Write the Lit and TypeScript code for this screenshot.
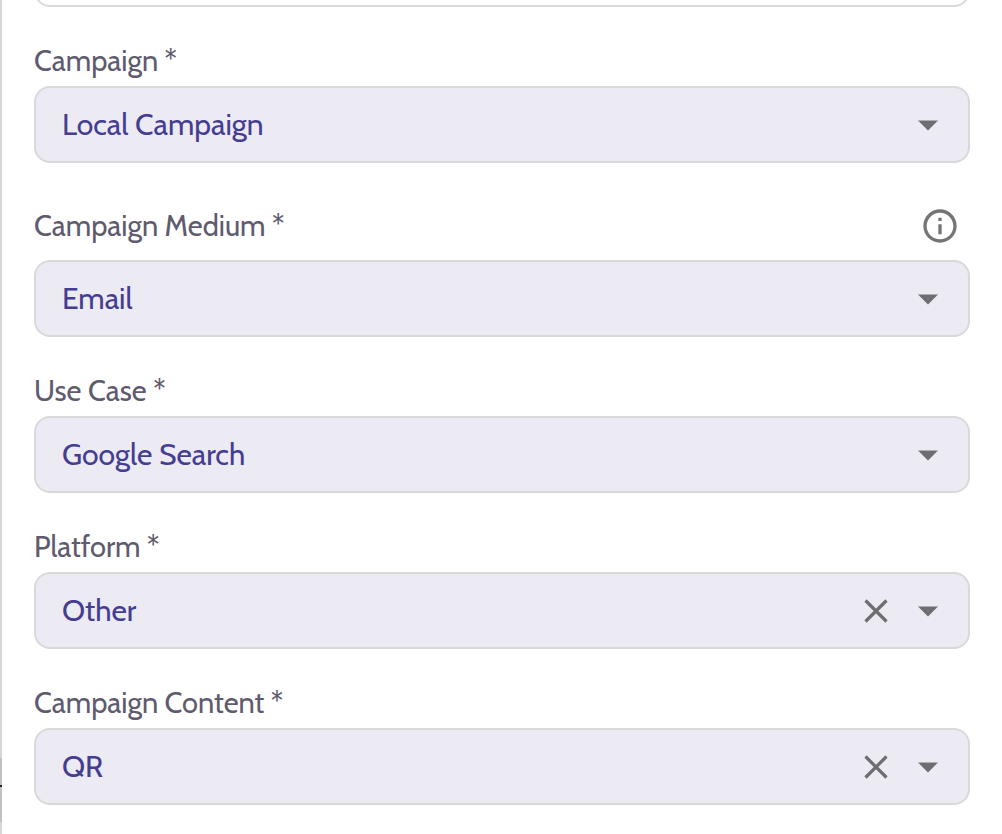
import { LitElement, html, css, nothing } from "lit";
import { customElement, property, state } from "lit/decorators.js";

@customElement("select-field")
class SelectField extends LitElement {
  @property() label = "";
  @property() value = "";
  @property({ type: Boolean }) clearable = false;
  @property({ type: Boolean }) info = false;

  static styles = css`
    :host {
      display: block;
      color: #5f5b6e;
    }
    .head {
      display: flex;
      align-items: center;
      justify-content: space-between;
      min-height: 40px;
      margin-bottom: 5px;
    }
    .label {
      font-size: 29px;
      line-height: 40px;
    }
    button {
      display: flex;
      margin: 0;
      padding: 0;
      border: 0;
      background: none;
      color: #6e6e70;
      cursor: pointer;
    }
    svg {
      display: block;
      fill: currentColor;
    }
    .info {
      padding: 9px 10px;
      color: #757575;
    }
    .box {
      display: grid;
      grid-template-columns: 1fr auto auto;
      align-items: center;
      column-gap: 12px;
      box-sizing: border-box;
      height: 77px;
      padding-right: 20px;
      border: 2px solid #d9d9da;
      border-radius: 16px;
      background: #eceaf3;
    }
    select {
      grid-area: 1 / 1 / 2 / 4;
      width: 100%;
      height: 73px;
      margin: 0;
      padding: 0 100px 0 26px;
      border: 0;
      border-radius: 14px;
      outline: none;
      background: transparent;
      appearance: none;
      color: #443d91;
      font-family: inherit;
      font-size: 30px;
    }
    .clear {
      grid-area: 1 / 2;
    }
    .arrow {
      grid-area: 1 / 3;
      color: #6e6e70;
      pointer-events: none;
    }
  `;

  private clear() {
    this.value = "";
  }

  private pick(e: Event) {
    this.value = (e.target as HTMLSelectElement).value;
  }

  render() {
    return html`
      <div class="head">
        <label class="label" for="choice">${this.label} *</label>
        ${this.info
          ? html`<button class="info" type="button" aria-label="About ${this.label}">
              <svg width="40" height="40" viewBox="0 0 24 24">
                <path
                  d="M11 7h2v2h-2zm0 4h2v6h-2zm1-9C6.48 2 2 6.48 2 12s4.48 10 10 10 10-4.48 10-10S17.52 2 12 2zm0 18c-4.41 0-8-3.59-8-8s3.59-8 8-8 8 3.59 8 8-3.59 8-8 8z"
                />
              </svg>
            </button>`
          : nothing}
      </div>
      <div class="box">
        <select id="choice" required @change=${this.pick}>
          ${this.value ? html`<option selected>${this.value}</option>` : html`<option value=""></option>`}
        </select>
        ${this.clearable
          ? html`<button class="clear" type="button" aria-label="Clear ${this.label}" @click=${this.clear}>
              <svg width="40" height="40" viewBox="0 0 40 40">
                <path d="M9.5 9.5l21 21M30.5 9.5l-21 21" fill="none" stroke="currentColor" stroke-width="3.2" />
              </svg>
            </button>`
          : nothing}
        <svg class="arrow" width="40" height="40" viewBox="0 0 40 40">
          <path d="M10 15.5h20l-10 10z" />
        </svg>
      </div>
    `;
  }
}

@customElement("app-root")
class AppRoot extends LitElement {
  @state() private fields = [
    { label: "Campaign", value: "Local Campaign" },
    { label: "Campaign Medium", value: "Email", info: true },
    { label: "Use Case", value: "Google Search" },
    { label: "Platform", value: "Other", clearable: true },
    { label: "Campaign Content", value: "QR", clearable: true },
  ];

  static styles = css`
    :host {
      display: flex;
      height: 100vh;
      overflow: hidden;
      background: #fff;
      font-family: Cabin, Lato, sans-serif;
    }
    .edge {
      display: flex;
      flex-direction: column;
      justify-content: flex-end;
      flex: none;
      box-sizing: border-box;
      width: 2px;
      padding-bottom: 12px;
      background: #d6d6d6;
    }
    .thumb {
      display: flex;
      align-items: center;
      height: 64px;
      background: #c1c1c1;
    }
    .mark {
      width: 2px;
      height: 2px;
      margin-bottom: 8px;
      background: #222;
    }
    form {
      display: flex;
      flex-direction: column;
      flex: 1;
      gap: 34px;
      min-width: 0;
      padding: 0 32px;
    }
    .previous {
      flex: none;
      box-sizing: border-box;
      width: 100%;
      height: 77px;
      margin: -70px 0 0;
      padding: 0 26px;
      border: 2px solid #d9d9da;
      border-radius: 16px;
      background: #fff;
      font: inherit;
    }
  `;

  render() {
    return html`
      <div class="edge"><div class="thumb"><div class="mark"></div></div></div>
      <form>
        <input class="previous" type="text" aria-label="Name" />
        ${this.fields.map(
          (f) => html`<select-field
            .label=${f.label}
            .value=${f.value}
            .info=${!!f.info}
            .clearable=${!!f.clearable}
          ></select-field>`,
        )}
      </form>
    `;
  }
}
